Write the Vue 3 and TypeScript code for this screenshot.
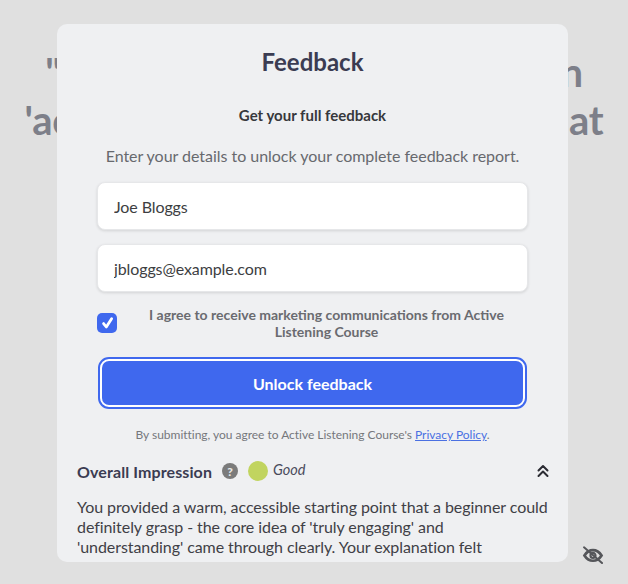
<script setup lang="ts">
import { ref } from 'vue'

const name = ref('Joe Bloggs')
const email = ref('jbloggs@example.com')
const agreed = ref(true)
</script>

<template>
  <div class="page">
    <div class="backdrop-text">
      <p class="line">"Imagine you'll want to explain</p>
      <p class="line">'active listening' to someone that</p>
    </div>

    <section class="modal">
      <h1 class="title">Feedback</h1>
      <form class="gate" @submit.prevent>
        <h2 class="gate-title">Get your full feedback</h2>
        <p class="gate-lead">Enter your details to unlock your complete feedback report.</p>
        <input v-model="name" class="field" type="text" />
        <input v-model="email" class="field" type="email" />
        <label class="consent">
          <span class="check" :class="{ on: agreed }">
            <input v-model="agreed" class="check-input" type="checkbox" />
            <svg viewBox="0 0 20 20" width="20" height="20" aria-hidden="true">
              <path d="M6.6 10.6 L9.3 14 L14.6 5.8" fill="none" stroke="#fff" stroke-width="2.8" stroke-linecap="round" stroke-linejoin="round" />
            </svg>
          </span>
          <span class="consent-text">I agree to receive marketing communications from Active Listening Course</span>
        </label>
        <div class="button-ring">
          <button class="unlock" type="submit">Unlock feedback</button>
        </div>
        <p class="legal">By submitting, you agree to Active Listening Course's <a class="legal-link" href="#">Privacy Policy</a>.</p>
      </form>

      <div class="section-head">
        <span class="section-title">Overall Impression</span>
        <span class="help">?</span>
        <span class="dot"></span>
        <em class="grade">Good</em>
        <svg class="chevrons" viewBox="0 0 12 14" width="12" height="14" aria-hidden="true">
          <path d="M1.5 6.5 L6 2 L10.5 6.5 M1.5 12 L6 7.5 L10.5 12" fill="none" stroke="#2b2c33" stroke-width="2" stroke-linecap="round" stroke-linejoin="round" />
        </svg>
      </div>
      <p class="section-body">You provided a warm, accessible starting point that a beginner could definitely grasp - the core idea of 'truly engaging' and 'understanding' came through clearly. Your explanation felt approachable and you showed an awareness that also notifies the</p>
    </section>

    <svg class="eye-off" viewBox="0 0 24 20" width="22" height="18" aria-hidden="true">
      <path d="M2.5 10.5 C5 6.6 8.2 4.6 12 4.6 C15.8 4.6 19 6.6 21.5 10.5 C19 14.4 15.8 16.4 12 16.4 C8.2 16.4 5 14.4 2.5 10.5 Z" fill="none" stroke="#55565a" stroke-width="3" />
      <circle cx="12" cy="10.5" r="2.8" fill="none" stroke="#55565a" stroke-width="2.4" />
      <path d="M2 1.5 L22 19" stroke="#55565a" stroke-width="2.2" stroke-linecap="round" />
    </svg>
  </div>
</template>

<style>
html, body { margin: 0; background: #e0e0e0; }
</style>

<style scoped>
.page {
  position: relative;
  width: 628px;
  height: 584px;
  overflow: hidden;
  background: #e0e0e0;
  font-family: Lato, "Open Sans", sans-serif;
}
.backdrop-text {
  padding-top: 48px;
  display: flex;
  flex-direction: column;
  align-items: center;
}
.line {
  margin: 0;
  white-space: nowrap;
  font-size: 40px;
  line-height: 48px;
  letter-spacing: -0.15px;
  font-weight: 700;
  color: #7d7f89;
}
.modal {
  position: absolute;
  left: 57px;
  top: 24px;
  width: 511px;
  height: 538px;
  box-sizing: border-box;
  padding: 0 20px;
  overflow: hidden;
  border-radius: 10px;
  background: #eff0f2;
}
.title {
  margin: 22px 0 0;
  text-align: center;
  font-size: 24px;
  line-height: 32px;
  font-weight: 700;
  color: #3b3c52;
}
.gate {
  display: flex;
  flex-direction: column;
  padding: 0 20px;
}
.gate-title {
  margin: 27px 0 0;
  text-align: center;
  font-size: 15px;
  line-height: 20px;
  font-weight: 700;
  color: #37383c;
}
.gate-lead {
  margin: 20px 0 0;
  text-align: center;
  font-size: 16px;
  line-height: 22px;
  letter-spacing: -0.03px;
  color: #67696e;
}
.field {
  box-sizing: border-box;
  width: 100%;
  height: 48px;
  margin-top: 14px;
  padding: 0 16px;
  border: 1px solid #e6e7e9;
  border-radius: 8px;
  outline: none;
  background: #fff;
  box-shadow: 0 1px 3px rgba(0, 0, 0, 0.12);
  font-family: inherit;
  font-size: 16px;
  letter-spacing: -0.1px;
  color: #3d3e42;
}
.gate-lead + .field { margin-top: 15px; }
.consent {
  display: flex;
  align-items: center;
  gap: 8px;
  margin-top: 14px;
}
.check {
  position: relative;
  flex: none;
  width: 20px;
  height: 20px;
  border-radius: 5px;
  background: #3f68ee;
}
.check svg { display: block; }
.check-input {
  position: absolute;
  inset: 0;
  margin: 0;
  opacity: 0;
}
.consent-text {
  flex: 1;
  text-align: center;
  font-size: 14px;
  line-height: 17px;
  font-weight: 700;
  color: #6a6b70;
}
.button-ring {
  margin: 17px 1px 0;
  padding: 2px;
  border: 2px solid #3f68ee;
  border-radius: 11px;
  background: #fff;
}
.unlock {
  display: block;
  width: 100%;
  height: 44px;
  border: 0;
  border-radius: 7px;
  background: #3f68ee;
  font-family: inherit;
  font-size: 16px;
  font-weight: 700;
  color: #fff;
}
.legal {
  margin: 18px 0 0;
  text-align: center;
  font-size: 12px;
  line-height: 16px;
  letter-spacing: -0.02px;
  color: #75777c;
}
.legal-link { color: #4a70e2; }
.section-head {
  display: flex;
  align-items: center;
  margin-top: 16px;
  height: 24px;
}
.section-title {
  font-size: 16px;
  letter-spacing: 0.1px;
  font-weight: 700;
  color: #3b3c52;
}
.help {
  display: flex;
  align-items: center;
  justify-content: center;
  width: 16px;
  height: 16px;
  margin-left: 10px;
  border-radius: 50%;
  background: #7b7b7b;
  font-size: 12px;
  font-weight: 900;
  color: #e8e8e8;
}
.dot {
  width: 20px;
  height: 20px;
  margin-left: 10px;
  border-radius: 50%;
  background: #c1d45f;
}
.grade {
  margin: 0 0 3px 5px;
  font-size: 14.5px;
  color: #4a4b5c;
}
.chevrons { margin-left: auto; margin-right: -1px; }
.section-body {
  margin: 14px 0 0;
  font-size: 16px;
  line-height: 20px;
  letter-spacing: -0.07px;
  color: #3f4046;
  width: 473px;
}
.eye-off {
  position: absolute;
  left: 582px;
  top: 546px;
}
</style>
